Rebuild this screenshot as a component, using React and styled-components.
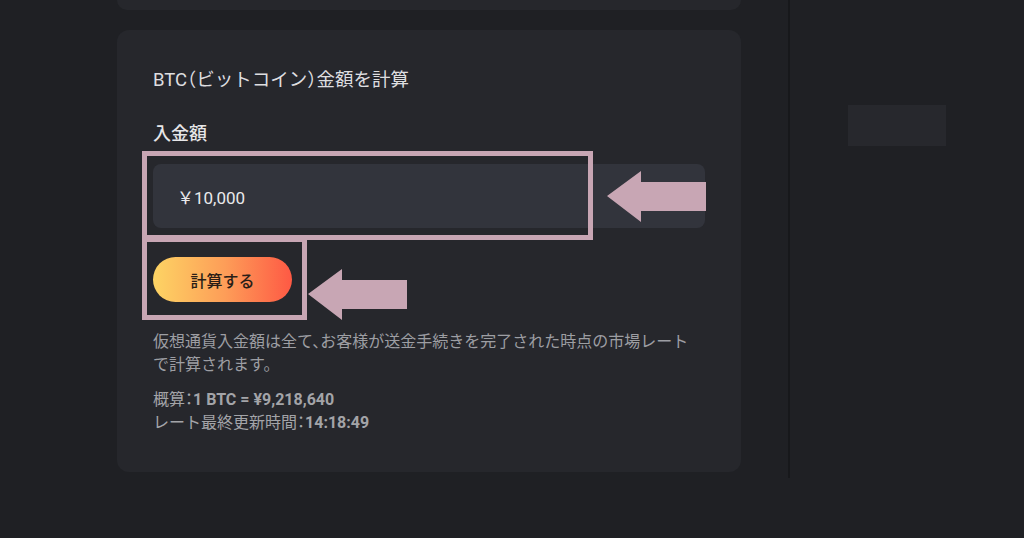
import React from "react";
import styled, { createGlobalStyle } from "styled-components";

const GlobalStyle = createGlobalStyle`
  html, body {
    margin: 0;
    padding: 0;
    background: #1f2024;
  }
  body {
    font-family: Roboto, "Noto Sans CJK JP", sans-serif;
    font-feature-settings: "halt";
    -webkit-font-smoothing: antialiased;
  }
  * { box-sizing: border-box; }
`;

const Page = styled.div`
  display: flex;
  width: 1024px;
  height: 538px;
  overflow: hidden;
  background: #1f2024;
`;

const Main = styled.main`
  flex: none;
  width: 788px;
  padding-left: 117px;
  display: flex;
  flex-direction: column;
  gap: 20px;
`;

const Sidebar = styled.aside`
  flex: none;
  width: 236px;
  height: 478px;
  border-left: 2px solid #17181b;
  padding: 105px 0 0 58px;
`;

const Placeholder = styled.div`
  width: 98px;
  height: 41px;
  background: #27282d;
`;

const TopCard = styled.div`
  width: 624px;
  height: 10px;
  background: #26272c;
  border-radius: 0 0 12px 12px;
`;

const Card = styled.section`
  position: relative;
  width: 624px;
  height: 442px;
  background: #26272c;
  border-radius: 12px;
  padding: 37px 36px;
  display: flex;
  flex-direction: column;
  align-items: flex-start;
`;

const Title = styled.h2`
  margin: 0;
  font-size: 18.5px;
  line-height: 26px;
  font-weight: 400;
  color: #dedee0;
`;

const Label = styled.label`
  margin-top: 28px;
  font-size: 18px;
  line-height: 26px;
  font-weight: 500;
  color: #e6e6e8;
`;

const AmountInput = styled.input`
  margin-top: 17px;
  width: 100%;
  height: 64px;
  border: none;
  outline: none;
  border-radius: 8px;
  background: #32343c;
  padding: 0 24px;
  font-family: Roboto, "Noto Sans CJK JP", sans-serif;
  font-size: 17px;
  color: #e9e9eb;
`;

const CalcButton = styled.button`
  margin-top: 29px;
  width: 139px;
  height: 45px;
  border: none;
  border-radius: 23px;
  background: linear-gradient(90deg, #fdd464 0%, #fd9d58 52%, #fe5944 100%);
  font-family: Roboto, "Noto Sans CJK JP", sans-serif;
  font-size: 16px;
  font-weight: 500;
  color: #2a1e17;
  cursor: pointer;
`;

const Note = styled.p`
  margin: 28px 0 0;
  width: 546px;
  font-size: 16px;
  line-height: 23px;
  color: #9d9ea3;
`;

const Stats = styled.div`
  margin-top: 12px;
  font-size: 16px;
  line-height: 23px;
  color: #a3a4a8;
`;

const Strong = styled.b`
  font-weight: 700;
`;

const Highlight = styled.div`
  position: absolute;
  left: ${(p) => p.$left}px;
  top: ${(p) => p.$top}px;
  width: ${(p) => p.$w}px;
  height: ${(p) => p.$h}px;
  border: 5px solid #c8a6b4;
  pointer-events: none;
`;

const ArrowWrap = styled.svg`
  position: absolute;
  left: ${(p) => p.$left}px;
  top: ${(p) => p.$top}px;
  width: 99px;
  height: 51px;
  pointer-events: none;
`;

function Arrow({ left, top }) {
  return (
    <ArrowWrap $left={left} $top={top} viewBox="0 0 99 51">
      <polygon
        points="0,25 34,0 34,11 99,11 99,40 34,40 34,51"
        fill="#c8a6b4"
      />
    </ArrowWrap>
  );
}

export default function App() {
  return (
    <>
      <GlobalStyle />
      <Page>
        <Main>
          <TopCard />
          <Card>
            <Title>BTC（ビットコイン）金額を計算</Title>
            <Label htmlFor="amount">入金額</Label>
            <AmountInput id="amount" defaultValue="￥10,000" readOnly />
            <CalcButton>計算する</CalcButton>
            <Note>
              仮想通貨入金額は全て、お客様が送金手続きを完了された時点の市場レートで計算されます。
            </Note>
            <Stats>
              <div>
                概算：<Strong>1 BTC = ¥9,218,640</Strong>
              </div>
              <div>
                レート最終更新時間：<Strong>14:18:49</Strong>
              </div>
            </Stats>
            <Highlight $left={25} $top={121} $w={451} $h={89} />
            <Highlight $left={25} $top={207} $w={165} $h={83} />
            <Arrow left={490} top={141} />
            <Arrow left={191} top={239} />
          </Card>
        </Main>
        <Sidebar>
          <Placeholder />
        </Sidebar>
      </Page>
    </>
  );
}
